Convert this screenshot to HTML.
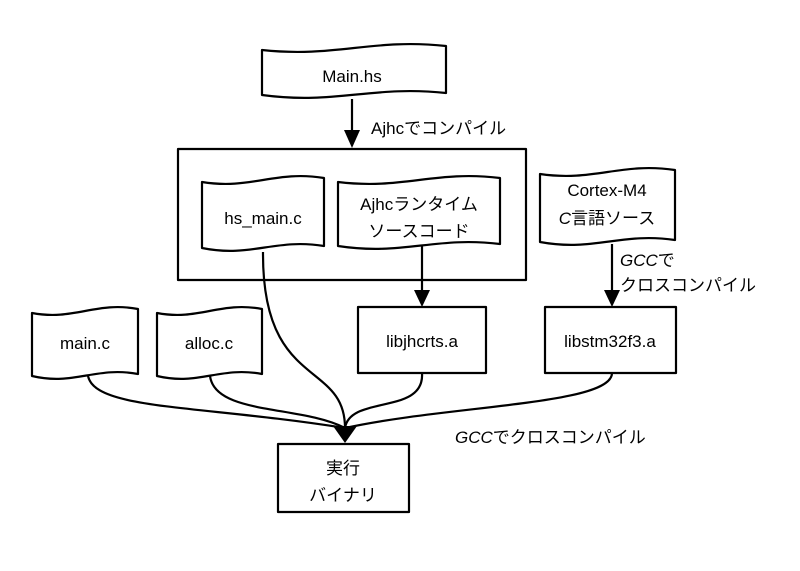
<!DOCTYPE html>
<html><head><meta charset="utf-8"><style>
html,body{margin:0;padding:0;background:#fff;}
text{font-family:"Liberation Sans","Noto Sans CJK JP",sans-serif;font-size:17px;fill:#000;}
</style></head><body>
<svg width="800" height="566" viewBox="0 0 800 566" xmlns="http://www.w3.org/2000/svg">
<g fill="none" stroke="#000" stroke-width="2.2" stroke-linejoin="round">
<path d="M262,50 C336,58 372,38 446,46 L446,93 C372,85 336,105 262,95 Z"/>
<path d="M202,182 C251,190 275,170 324,178 L324,246 C275,238 251,258 202,248 Z"/>
<path d="M338,182 C403,190 435,170 500,178 L500,244 C435,236 403,256 338,246 Z"/>
<path d="M540,174 C594,182 621,162 675,170 L675,240 C621,232 594,252 540,242 Z"/>
<path d="M32,313 C74,321 96,301 138,309 L138,374 C96,366 74,386 32,376 Z"/>
<path d="M157,313 C199,321 220,301 262,309 L262,374 C220,366 199,386 157,376 Z"/>
<rect x="178" y="149" width="348" height="131"/>
<rect x="358" y="307" width="128" height="66"/>
<rect x="545" y="307" width="131" height="66"/>
<rect x="278" y="444" width="131" height="68"/>
<path d="M352,99 L352,132"/>
<path d="M422,246 L422,292"/>
<path d="M612,244 L612,292"/>
<path d="M88,376 C95,410 200,405 345,428"/>
<path d="M210,376 C215,415 300,405 345,428"/>
<path d="M263,252 C262,390 345,360 345,428"/>
<path d="M422,373 C425,415 350,395 345,428"/>
<path d="M612,373 C612,405 450,405 345,428"/>
</g>
<g fill="#000">
<path d="M352,148 L344,130 L360,130 Z"/>
<path d="M414,290 L430,290 L422,307 Z"/>
<path d="M604,290 L620,290 L612,307 Z"/>
<path d="M333,426 L357,426 L345,443 Z"/>
</g>
<text x="352" y="82" text-anchor="middle">Main.hs</text>
<text x="371" y="134">Ajhcでコンパイル</text>
<text x="263" y="224" text-anchor="middle">hs_main.c</text>
<text x="419" y="210" text-anchor="middle">Ajhcランタイム</text>
<text x="419" y="237" text-anchor="middle">ソースコード</text>
<text x="607" y="196" text-anchor="middle">Cortex-M4</text>
<text x="607" y="224" text-anchor="middle"><tspan font-style="italic">C</tspan>言語ソース</text>
<text x="620" y="266"><tspan font-style="italic">GCC</tspan>で</text>
<text x="620" y="291">クロスコンパイル</text>
<text x="422" y="347" text-anchor="middle">libjhcrts.a</text>
<text x="610" y="347" text-anchor="middle">libstm32f3.a</text>
<text x="85" y="349" text-anchor="middle">main.c</text>
<text x="209" y="349" text-anchor="middle">alloc.c</text>
<text x="455" y="443"><tspan font-style="italic">GCC</tspan>でクロスコンパイル</text>
<text x="343" y="474" text-anchor="middle">実行</text>
<text x="343" y="501" text-anchor="middle">バイナリ</text>
</svg>
</body></html>
